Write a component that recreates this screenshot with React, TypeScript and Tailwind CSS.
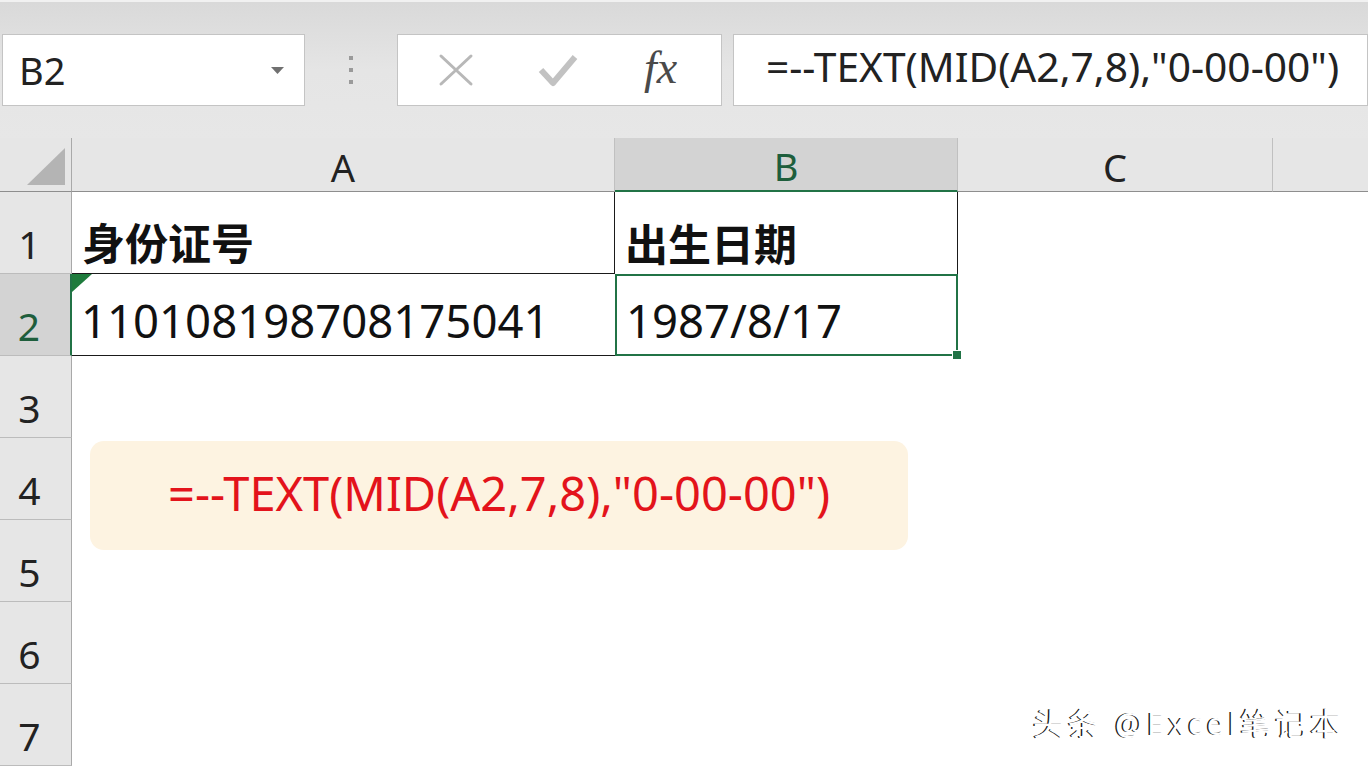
import React from "react";

function NameBox() {
  return (
    <div className="ml-[2px] flex h-[72px] w-[303px] items-center justify-between border border-[#c4c4c4] bg-white pl-[16px] pr-[20px]">
      <span className="text-[38px] leading-none text-[#222]">B2</span>
      <svg width="13" height="7" viewBox="0 0 13 7">
        <polygon points="0,0 13,0 6.5,7" fill="#707070" />
      </svg>
    </div>
  );
}

function FunctionBox() {
  return (
    <div className="flex h-[72px] w-[325px] items-center border border-[#c4c4c4] bg-white">
      <div className="flex w-[110px] justify-center pl-[6px]">
        <svg width="36" height="34" viewBox="0 0 36 34">
          <path d="M3 3 L33 31 M33 3 L3 31" stroke="#b8b8b8" strokeWidth="3" strokeLinecap="round" />
        </svg>
      </div>
      <div className="flex w-[100px] justify-center">
        <svg width="40" height="34" viewBox="0 0 40 34">
          <path d="M3 17 L15 30 L37 4" stroke="#c2c2c2" strokeWidth="6" fill="none" strokeLinejoin="round" />
        </svg>
      </div>
      <div className="flex flex-1 justify-center pb-[4px] pr-[8px]">
        <span className="font-['Liberation_Serif','DejaVu_Serif',serif] text-[46px] italic leading-none text-[#4a4a4a]">fx</span>
      </div>
    </div>
  );
}

function Toolbar() {
  return (
    <div className="flex h-[138px] items-start border-t-2 border-[#f1f1f1] bg-gradient-to-b from-[#d9d9d9] via-[#e5e5e5] to-[#e7e7e7] pt-[32px]">
      <NameBox />
      <div className="flex h-[72px] w-[92px] flex-col items-center justify-center gap-[8px]">
        <div className="h-[4px] w-[4px] bg-[#9a9a9a]" />
        <div className="h-[4px] w-[4px] bg-[#9a9a9a]" />
        <div className="h-[4px] w-[4px] bg-[#9a9a9a]" />
      </div>
      <FunctionBox />
      <div className="ml-[11px] flex h-[72px] flex-1 items-center border border-[#c4c4c4] bg-white pb-[8px] pl-[32px]">
        <span className="text-[40.7px] leading-none text-[#222]">=--TEXT(MID(A2,7,8),"0-00-00")</span>
      </div>
    </div>
  );
}

function RowHead({ n }: { n: number }) {
  const active = n === 2;
  return (
    <div
      className={
        active
          ? "flex items-end justify-center border-b border-r-2 border-b-[#bcbcbc] border-r-[#217346] bg-[#d3d3d3] pb-[10px] pr-[12px] text-[39px] leading-none text-[#1e5e3c]"
          : "flex items-end justify-center border-b border-r border-b-[#bcbcbc] border-r-[#a9a9a9] bg-[#e6e6e6] pb-[10px] pr-[12px] text-[39px] leading-none text-[#222]"
      }
    >
      {n}
    </div>
  );
}

export default function App() {
  return (
    <div className="relative h-[766px] w-[1368px] overflow-hidden bg-[#e6e6e6] font-['Noto_Sans','Noto_Sans_CJK_SC',sans-serif]">
      <Toolbar />

      <div className="grid grid-cols-[72px_543px_343px_315px_1fr] grid-rows-[54px_repeat(7,82px)]">
        {/* header row */}
        <div className="flex items-end justify-end border-b border-r border-b-[#8e8e8e] border-r-[#a9a9a9] pb-[6px] pr-[6px]">
          <svg width="38" height="37" viewBox="0 0 38 37">
            <polygon points="0,37 38,0 38,37" fill="#b4b4b4" />
          </svg>
        </div>
        <div className="flex items-center justify-center border-b border-r border-b-[#8e8e8e] border-r-[#c0c0c0] pt-[4px] text-[38px] leading-none text-[#222]">
          A
        </div>
        <div className="flex items-center justify-center border-b-2 border-r border-b-[#217346] border-r-[#c0c0c0] bg-[#d3d3d3] pt-[4px] text-[38px] leading-none text-[#1e5e3c]">
          B
        </div>
        <div className="flex items-center justify-center border-b border-r border-b-[#8e8e8e] border-r-[#c0c0c0] pt-[4px] text-[38px] leading-none text-[#222]">
          C
        </div>
        <div className="border-b border-b-[#8e8e8e]" />

        {/* row 1 */}
        <RowHead n={1} />
        <div className="flex items-end border-b border-r border-[#1a1a1a] bg-white pb-[10px] pl-[10px] font-['Noto_Sans_CJK_SC',sans-serif] text-[43px] font-bold leading-none text-[#111]">
          身份证号
        </div>
        <div className="flex items-end border-r border-[#1a1a1a] bg-white pb-[10px] pl-[10px] font-['Noto_Sans_CJK_SC',sans-serif] text-[43px] font-bold leading-none text-[#111]">
          出生日期
        </div>
        <div className="bg-white" />
        <div className="bg-white" />

        {/* row 2 */}
        <RowHead n={2} />
        <div className="relative flex items-end border-b border-[#1a1a1a] bg-white pb-[12px] pl-[9px] text-[45.5px] leading-none text-[#111]">
          <svg className="absolute left-0 top-0" width="20" height="18" viewBox="0 0 20 18">
            <polygon points="0,0 20,0 0,18" fill="#1e7b3c" />
          </svg>
          110108198708175041
        </div>
        <div className="relative flex items-end border-2 border-[#217346] bg-white pb-[11px] pl-[9px] text-[45.5px] leading-none text-[#111]">
          1987/8/17
          <div className="absolute -bottom-[6px] -right-[6px] h-[10px] w-[10px] border border-white bg-[#217346]" />
        </div>
        <div className="bg-white" />
        <div className="bg-white" />

        {[3, 4, 5, 6, 7].map((n) => (
          <React.Fragment key={n}>
            <RowHead n={n} />
            <div className="bg-white" />
            <div className="bg-white" />
            <div className="bg-white" />
            <div className="bg-white" />
          </React.Fragment>
        ))}
      </div>

      {/* floating formula note */}
      <div className="absolute left-[90px] top-[441px] flex h-[109px] w-[818px] items-center justify-center rounded-[14px] bg-[#fdf3e1] pb-[4px]">
        <span className="text-[47px] leading-none text-[#e3131b]">=--TEXT(MID(A2,7,8),"0-00-00")</span>
      </div>

      {/* watermark */}
      <div className="absolute left-[1033px] top-[708px] font-['Noto_Sans','Noto_Sans_CJK_SC',sans-serif] text-[31px] leading-none tracking-[4px] text-white [text-shadow:-1.5px_-0.5px_0_#1a1a1a]">
        头条 @Excel笔记本
      </div>
    </div>
  );
}
